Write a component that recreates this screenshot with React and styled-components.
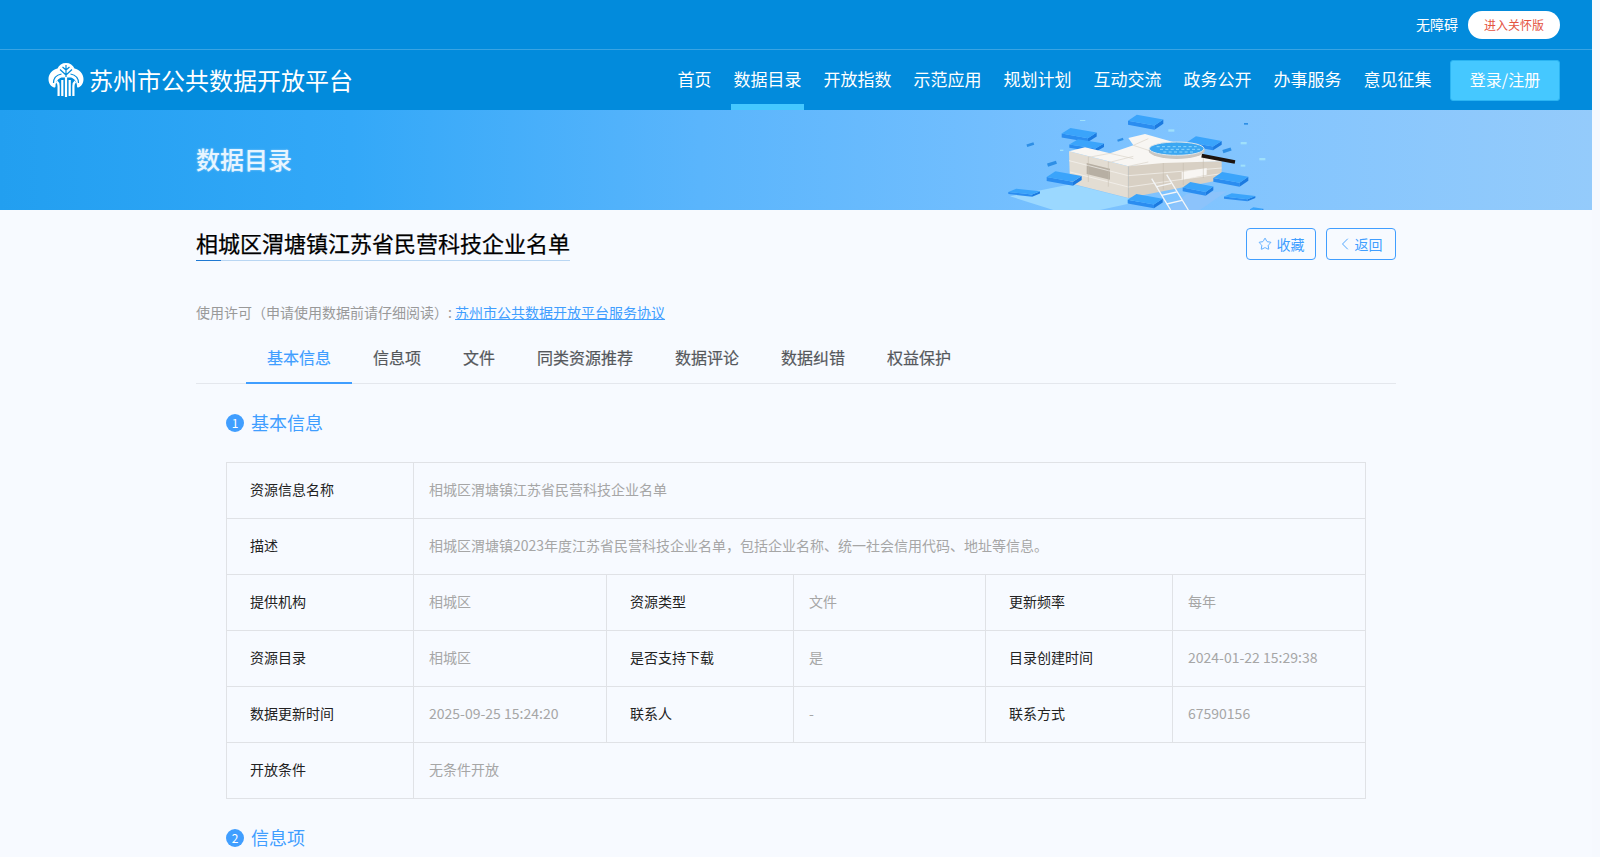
import React from "react";
import styled, { createGlobalStyle } from "styled-components";
import { Star, ChevronLeft } from "lucide-react";

const GlobalStyle = createGlobalStyle`
  html, body {
    margin: 0;
    height: 100%;
    overflow: hidden;
    background: #f6f9fe;
    font-family: "Noto Sans CJK SC", "Noto Sans", sans-serif;
  }
  * {
    box-sizing: border-box;
  }
`;

const Page = styled.div`
  width: 1592px;
  height: 857px;
  overflow: hidden;
  background: #f7faff;
`;

const Header = styled.header`
  background: #028bdc;
  color: #fff;
`;

const TopBar = styled.div`
  height: 50px;
  padding: 11px 32px 0 0;
  display: flex;
  justify-content: flex-end;
  align-items: flex-start;
  gap: 10px;
  border-bottom: 1px solid rgba(255, 255, 255, 0.22);
`;

const Accessible = styled.a`
  font-size: 14px;
  line-height: 26px;
`;

const CareButton = styled.a`
  width: 92px;
  height: 28px;
  border-radius: 14px;
  background: #fff;
  color: #e4533f;
  font-size: 12px;
  line-height: 27px;
  text-align: center;
`;

const NavRow = styled.div`
  height: 60px;
  padding: 0 32px 0 48px;
  display: flex;
  justify-content: space-between;
  align-items: center;
`;

const Logo = styled.div`
  display: flex;
  align-items: center;
  gap: 5px;
`;

const LogoName = styled.span`
  font-size: 24px;
  line-height: 36px;
  white-space: nowrap;
`;

const Nav = styled.nav`
  display: flex;
  align-items: center;
  gap: 17px;
`;

const NavItem = styled.a`
  height: 60px;
  padding: 0 2.5px;
  font-size: 17px;
  line-height: 58px;
  white-space: nowrap;
  box-shadow: ${(p) => (p.$active ? "inset 0 -6px 0 #45c8ff" : "none")};
`;

const LoginButton = styled.a`
  width: 110px;
  height: 41px;
  margin-left: -1px;
  border: 1px solid #2bb4f2;
  border-radius: 3px;
  background: #45c8ff;
  font-size: 16px;
  line-height: 36px;
  text-align: center;
`;

const Banner = styled.section`
  height: 100px;
  padding-left: 196px;
  display: flex;
  align-items: center;
  background: linear-gradient(90deg, #229ff0 0%, #33a8f8 22%, #5ab5fc 44%, #7cc2ff 70%, #94cbfb 100%);
`;

const BannerTitle = styled.h2`
  width: 804px;
  margin: 0 0 4px;
  font-size: 24px;
  font-weight: 500;
  color: #e8f5ff;
  text-shadow: 0 0 2px rgba(255, 255, 255, 0.5);
`;

const Main = styled.main`
  width: 1200px;
  margin: 0 auto 0 196px;
`;

const TitleRow = styled.div`
  padding-top: 18px;
  display: flex;
  justify-content: space-between;
  align-items: flex-start;
`;

const Title = styled.h1`
  position: relative;
  margin: 0;
  height: 33px;
  font-size: 22px;
  font-weight: 400;
  line-height: 29px;
  color: #000;
  -webkit-text-stroke: 0.25px #000;
  border-bottom: 1px solid #b9d6f3;
  &::after {
    content: "";
    position: absolute;
    left: 0;
    bottom: -1px;
    width: 25px;
    height: 1px;
    background: #1e78d2;
  }
`;

const Actions = styled.div`
  display: flex;
  gap: 10px;
`;

const ActionButton = styled.a`
  width: 70px;
  height: 32px;
  display: flex;
  align-items: center;
  justify-content: center;
  gap: ${(p) => (p.$back ? "0" : "5px")};
  padding-right: ${(p) => (p.$back ? "5px" : "0")};
  border: 1px solid #409eff;
  border-radius: 4px;
  color: #409eff;
  font-size: 14px;
  line-height: 26px;
`;

const License = styled.p`
  margin: 41px 0 0;
  font-size: 14px;
  line-height: 20px;
  color: #999;
  a {
    color: #409eff;
    text-decoration: underline;
  }
`;

const Tabs = styled.div`
  margin-top: 11px;
  padding-left: 50px;
  height: 51px;
  display: flex;
  border-bottom: 1px solid #e4e7ed;
`;

const Tab = styled.a`
  height: 51px;
  padding: 0 21px;
  font-size: 16px;
  line-height: 48px;
  color: ${(p) => (p.$active ? "#409eff" : "#55585c")};
  -webkit-text-stroke: 0.2px ${(p) => (p.$active ? "#409eff" : "#55585c")};
  border-bottom: 2px solid ${(p) => (p.$active ? "#409eff" : "transparent")};
`;

const Section = styled.section`
  padding: 0 30px;
`;

const SectionHead = styled.div`
  margin: 27px 0;
  height: 24px;
  display: flex;
  align-items: center;
  gap: 7px;
  font-size: 18px;
  color: #409eff;
`;

const SectionName = styled.span`
  line-height: 22px;
  height: 24px;
`;

const Badge = styled.span`
  width: 18px;
  height: 18px;
  border-radius: 50%;
  background: #409eff;
  color: #fff;
  font-size: 12px;
  line-height: 18px;
  text-align: center;
`;

const InfoTable = styled.table`
  width: 1139px;
  table-layout: fixed;
  border-collapse: collapse;
  font-size: 14px;
  td {
    height: 56px;
    padding-bottom: 4px;
    border: 1px solid #e0e2e6;
  }
`;

const Label = styled.td`
  padding-left: 23px;
  color: #222;
`;

const Value = styled.td`
  padding-left: 15px;
  color: #a6a6a6;
`;

const rows = [
  [["提供机构", "相城区"], ["资源类型", "文件"], ["更新频率", "每年"]],
  [["资源目录", "相城区"], ["是否支持下载", "是"], ["目录创建时间", "2024-01-22 15:29:38"]],
  [["数据更新时间", "2025-09-25 15:24:20"], ["联系人", "-"], ["联系方式", "67590156"]],
];

const navItems = ["首页", "数据目录", "开放指数", "示范应用", "规划计划", "互动交流", "政务公开", "办事服务", "意见征集"];
const tabItems = ["基本信息", "信息项", "文件", "同类资源推荐", "数据评论", "数据纠错", "权益保护"];

function LogoMark() {
  return (
    <svg width="36" height="36" viewBox="0 0 36 36">
      <path
        fill="#fff"
        d="M18 1c4 0 7 2 8.500 5.500C31 7.500 35.500 11.500 35.500 17c0 4.500-2.500 8-5.500 8.500-.8 0-1-.6-1-1.500 0-4-2.500-7.500-6-8.500h-9.500c-3.500 1-6 4.500-6 8.500 0 .9-.2 1.500-1 1.500C3 25 .5 21.500.5 17c0-5.500 4.500-9.500 9-10.500C11 3 14 1 18 1z"
      />
      <g fill="none" stroke="#028bdc" strokeWidth="1.200">
        <path d="M18 3v12M18 8l-3.500-3M18 8l3.500-3M18 13l-6-5.500M18 13l6-5.500" />
        <path d="M5.500 21c0-4.500 3-8 8-9M30.500 21c0-4.500-3-8-8-9" />
      </g>
      <g fill="none" stroke="#fff" strokeWidth="2.200">
        <path d="M18 15v20M14.300 18v16M21.700 18v16" />
        <path d="M10.600 34V24c0-2-.6-3.500-2-4.500M25.400 34V24c0-2 .6-3.500 2-4.500" />
      </g>
    </svg>
  );
}

function Cuboid({ x, y, w, h, top = "#3aa4fb", left = "#2b8df0", right = "#1b7ae0" }) {
  const d = h * 0.27;
  const th = h - d;
  const L = [x, y + th * 0.55];
  const T = [x + w * 0.25, y];
  const R = [x + w, y + th * 0.45];
  const F = [x + w * 0.75, y + th];
  const pts = (...a) => a.map((p) => p.join(",")).join(" ");
  const drop = (p) => [p[0], p[1] + d];
  return (
    <g>
      <polygon fill={left} points={pts(L, F, drop(F), drop(L))} />
      <polygon fill={right} points={pts(F, R, drop(R), drop(F))} />
      <polygon fill={top} points={pts(L, T, R, F)} />
    </g>
  );
}

function DataIllustration() {
  return (
    <svg width="280" height="100" viewBox="0 6 840 300">
      <polygon fill="#9bd8ff" points="30,265 215,228 420,280 300,306 160,306" />
      <polygon fill="#8cc3fb" points="560,258 680,250 600,306 500,306" />
      <Cuboid x={25} y={242} w={95} h={24} />
      <Cuboid x={672} y={256} w={94} h={24} />
      <Cuboid x={750} y={298} w={40} h={14} />
      <Cuboid x={384} y={20} w={106} h={45} />
      <Cuboid x={185} y={60} w={105} h={42} />
      <Cuboid x={208} y={94} w={104} h={38} />
      <Cuboid x={562} y={85} w={103} h={42} />
      <polygon fill="#e3ddd3" points="207,130 385,175 385,270 210,226" />
      <polygon fill="#d8d0c4" points="385,175 490,160 665,160 665,215 385,270" />
      <polygon fill="#f8f6f3" points="207,130 255,118 330,136 400,112 385,90 435,78 530,105 610,140 665,160 490,165 385,175" />
      <polygon fill="#b7afa3" points="260,165 330,182 330,215 260,198" />
      <polygon fill="#f8f6f3" points="545,192 620,180 620,200 545,215" />
      <g fill="none" stroke="#d9d3c9" strokeWidth="2">
        <path d="M265 148L330 136M325 164L400 145M385 175L445 162M330 136L400 152M400 112L470 135M445 92L400 112" />
      </g>
      <g fill="none" stroke="#f8f6f3" strokeWidth="2">
        <path d="M207 158L385 203M210 192L385 237M385 203L665 180M385 237L665 197" />
      </g>
      <g fill="none" stroke="#c2baad" strokeWidth="1.500">
        <path d="M265 146v76M325 160v76M385 175v95M490 165v80M550 165v66M610 150v60" />
      </g>
      <path fill="none" stroke="#1c1410" strokeWidth="11" d="M605 143L705 162" />
      <ellipse cx="530" cy="128" rx="84" ry="25" fill="#c9c6c2" />
      <ellipse cx="530" cy="122" rx="82" ry="20" fill="#3ba7f2" stroke="#dfe6ea" strokeWidth="3" />
      <path fill="none" stroke="#8fd6fb" strokeWidth="3" strokeDasharray="9 7" d="M470 116H590M480 124H600M490 132H580" />
      <Cuboid x={140} y={190} w={105} h={43} />
      <Cuboid x={640} y={192} w={105} h={44} />
      <Cuboid x={548} y={222} w={92} h={41} />
      <Cuboid x={383} y={258} w={105} h={43} />
      <g fill="none" stroke="#f4f6f8" strokeWidth="4">
        <path d="M455 212L512 306M500 200L565 306" />
        <path d="M470 236L514 226M484 262L530 252M500 288L546 277" />
      </g>
      <g fill="#2e8fe6">
        <rect x="80" y="106" width="22" height="8" transform="rotate(-18 91 110)" />
        <rect x="142" y="162" width="28" height="10" transform="rotate(-18 156 167)" />
        <rect x="668" y="122" width="26" height="10" transform="rotate(-18 681 127)" />
        <rect x="352" y="92" width="18" height="7" transform="rotate(-18 361 95)" />
        <rect x="732" y="45" width="12" height="5" />
      </g>
      <g fill="#9fe0fb">
        <rect x="505" y="64" width="18" height="7" />
        <rect x="722" y="102" width="18" height="7" />
        <rect x="778" y="150" width="18" height="7" />
        <rect x="722" y="170" width="14" height="6" />
        <rect x="240" y="36" width="16" height="3" />
        <rect x="180" y="125" width="10" height="4" />
      </g>
    </svg>
  );
}

export default function App() {
  return (
    <Page>
      <GlobalStyle />
      <Header>
        <TopBar>
          <Accessible>无障碍</Accessible>
          <CareButton>进入关怀版</CareButton>
        </TopBar>
        <NavRow>
          <Logo>
            <LogoMark />
            <LogoName>苏州市公共数据开放平台</LogoName>
          </Logo>
          <Nav>
            {navItems.map((item) => (
              <NavItem key={item} $active={item === "数据目录"}>
                {item}
              </NavItem>
            ))}
            <LoginButton>登录/注册</LoginButton>
          </Nav>
        </NavRow>
      </Header>
      <Banner>
        <BannerTitle>数据目录</BannerTitle>
        <DataIllustration />
      </Banner>
      <Main>
        <TitleRow>
          <Title>相城区渭塘镇江苏省民营科技企业名单</Title>
          <Actions>
            <ActionButton>
              <Star size={14} strokeWidth={1.4} />
              收藏
            </ActionButton>
            <ActionButton $back>
              <ChevronLeft size={20} strokeWidth={1.1} />
              返回
            </ActionButton>
          </Actions>
        </TitleRow>
        <License>
          使用许可（申请使用数据前请仔细阅读）: <a>苏州市公共数据开放平台服务协议</a>
        </License>
        <Tabs>
          {tabItems.map((item, i) => (
            <Tab key={item} $active={i === 0}>
              {item}
            </Tab>
          ))}
        </Tabs>
        <Section>
          <SectionHead>
            <Badge>1</Badge>
            <SectionName>基本信息</SectionName>
          </SectionHead>
          <InfoTable>
            <colgroup>
              <col width="187" />
              <col width="193" />
              <col width="187" />
              <col width="192" />
              <col width="187" />
              <col width="193" />
            </colgroup>
            <tbody>
              <tr>
                <Label>资源信息名称</Label>
                <Value colSpan={5}>相城区渭塘镇江苏省民营科技企业名单</Value>
              </tr>
              <tr>
                <Label>描述</Label>
                <Value colSpan={5}>相城区渭塘镇2023年度江苏省民营科技企业名单，包括企业名称、统一社会信用代码、地址等信息。</Value>
              </tr>
              {rows.map((row) => (
                <tr key={row[0][0]}>
                  {row.map(([label, value]) => (
                    <React.Fragment key={label}>
                      <Label>{label}</Label>
                      <Value>{value}</Value>
                    </React.Fragment>
                  ))}
                </tr>
              ))}
              <tr>
                <Label>开放条件</Label>
                <Value colSpan={5}>无条件开放</Value>
              </tr>
            </tbody>
          </InfoTable>
          <SectionHead>
            <Badge>2</Badge>
            <SectionName>信息项</SectionName>
          </SectionHead>
        </Section>
      </Main>
    </Page>
  );
}
